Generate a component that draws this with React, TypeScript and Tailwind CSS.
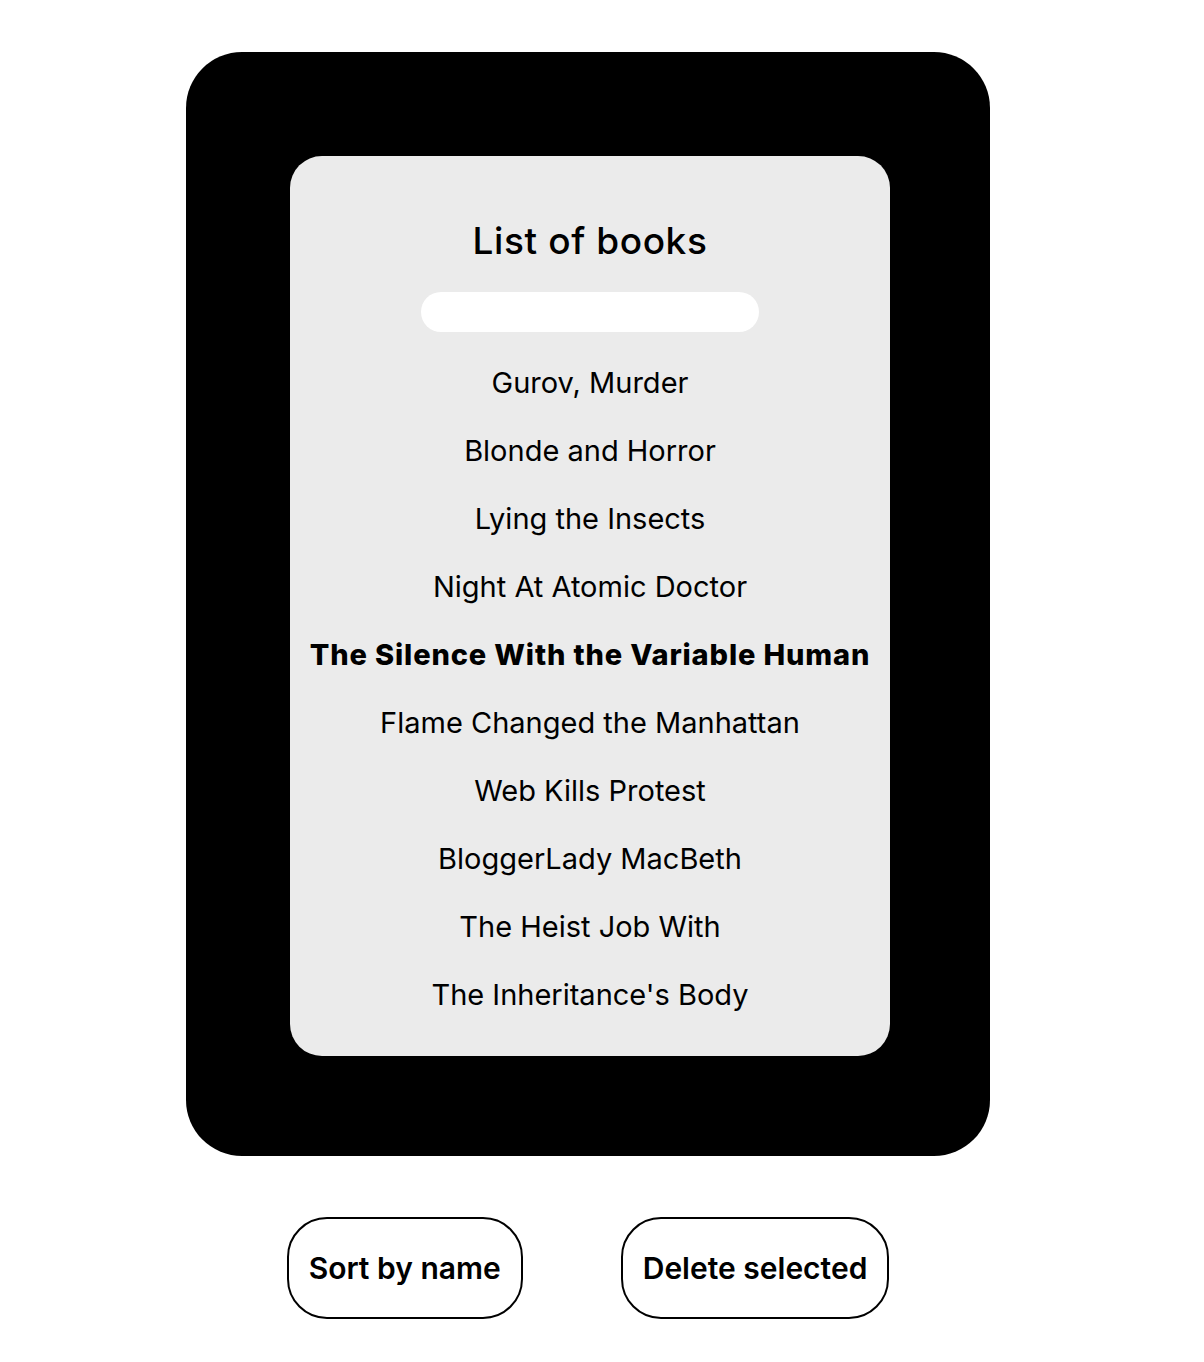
const books = [
  "Gurov, Murder",
  "Blonde and Horror",
  "Lying the Insects",
  "Night At Atomic Doctor",
  "The Silence With the Variable Human",
  "Flame Changed the Manhattan",
  "Web Kills Protest",
  "BloggerLady MacBeth",
  "The Heist Job With",
  "The Inheritance's Body",
];

export default function App() {
  const selected = 4;
  return (
    <div
      className="w-[1176px] min-h-[1362px] bg-white flex flex-col items-center pt-[52px] text-black"
      style={{ fontFamily: "Inter, 'Noto Sans', sans-serif" }}
    >
      <div className="w-[804px] bg-black rounded-[56px] pl-[104px] pt-[104px] pr-[100px] pb-[100px]">
        <div className="w-[600px] bg-[#ebebeb] rounded-[32px] pt-[63px] pb-[43px] flex flex-col items-center">
          <h1 className="text-[37px] leading-[44px] font-medium tracking-[0.6px]">List of books</h1>
          <input className="mt-[29px] w-[338px] h-10 rounded-full bg-white outline-none px-4 text-[20px]" />
          <ul className="mt-[33px] flex flex-col gap-[32px] items-center">
            {books.map((b, i) => (
              <li
                key={b}
                className={`text-[29px] leading-[36px] text-center whitespace-nowrap ${
                  i === selected ? "font-extrabold tracking-[0.85px]" : ""
                }`}
              >
                {b}
              </li>
            ))}
          </ul>
        </div>
      </div>
      <div className="mt-[61px] flex gap-[98px]">
        <button className="h-[102px] px-[20px] border-2 border-black rounded-[40px] text-[30px] font-semibold">
          Sort by name
        </button>
        <button className="h-[102px] px-[20px] border-2 border-black rounded-[40px] text-[30px] font-semibold">
          Delete selected
        </button>
      </div>
    </div>
  );
}
